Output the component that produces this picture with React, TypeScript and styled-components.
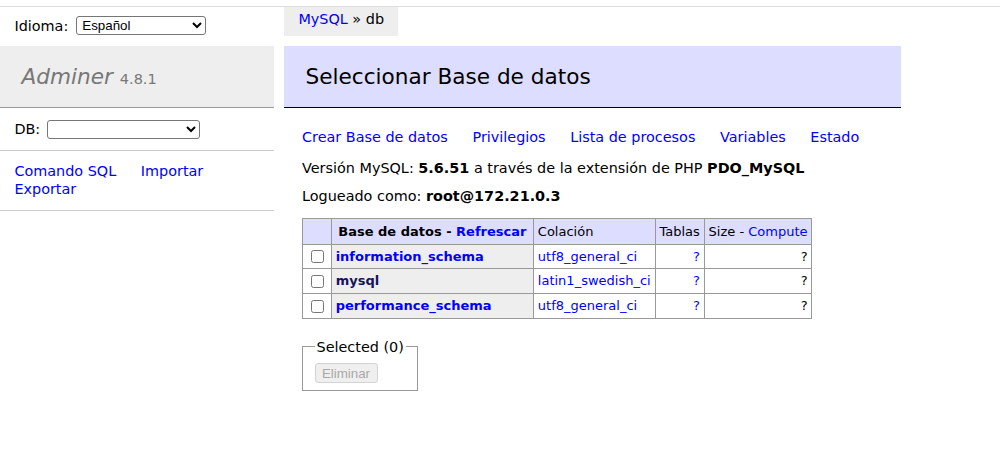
import React from 'react';
import styled, { createGlobalStyle } from 'styled-components';

const Global = createGlobalStyle`
  html, body { margin: 0; padding: 0; background: #fff; }
  body {
    font-family: "DejaVu Sans", Verdana, sans-serif;
    font-size: 14.4px;
    line-height: 18px;
    color: #000;
  }
  a { color: blue; text-decoration: none; }
`;

const TopRule = styled.div`
  height: 6px;
  border-bottom: 1px solid #ddd;
`;

const Page = styled.div`
  display: flex;
  align-items: flex-start;
`;

const Sidebar = styled.aside`
  width: 273.6px;
  flex: none;
`;

const LangBar = styled.div`
  box-sizing: border-box;
  height: 38.8px;
  padding: 4.3px 14.4px 6px;
  display: flex;
  align-items: center;
  gap: 8px;
`;

const NativeSelect = styled.select<{ $w: number }>`
  width: ${(p) => p.$w}px;
  height: 19px;
  font-family: "Liberation Sans", Arial, sans-serif;
  font-size: 13.33px;
  color: #000;
  background: #fff;
  border: 1px solid #767676;
  border-radius: 3px;
  padding: 0 0 0 1px;
`;

const Brand = styled.h1`
  margin: 0;
  padding: 17.28px 21.6px;
  font-size: 21.6px;
  line-height: 27px;
  font-weight: normal;
  color: #777;
  background: #eee;
  border-bottom: 1px solid #999;
`;

const BrandName = styled.span`
  font-style: italic;
`;

const BrandVersion = styled.span`
  font-size: 14.47px;
  line-height: 1;
`;

const SideBlock = styled.div`
  padding: 11.52px 14.4px;
  border-bottom: 1px solid #ccc;
`;

const DbRow = styled(SideBlock)`
  box-sizing: border-box;
  height: 42.5px;
  padding-top: 0;
  padding-bottom: 0;
  display: flex;
  align-items: center;
  gap: 7px;
`;

const NavLink = styled.a`
  margin-right: 20px;
  white-space: nowrap;
`;

const Main = styled.main`
  margin-left: 10.4px;
  width: 617px;
`;

const Breadcrumb = styled.div`
  display: inline-block;
  box-sizing: border-box;
  height: 28.8px;
  line-height: 25.9px;
  padding: 0 14.4px;
  background: #eee;
  white-space: nowrap;
`;

const Heading = styled.h2`
  margin: 10px 0 20px;
  padding: 17.28px 21.6px;
  font-size: 21.6px;
  line-height: 27px;
  font-weight: normal;
  color: #000;
  background: #ddf;
  border-bottom: 1px solid #000;
`;

const Body = styled.div`
  padding-left: 18px;
`;

const Para = styled.p<{ $mb: number }>`
  margin: 0 0 ${(p) => p.$mb}px;
`;

const Table = styled.table`
  border-collapse: collapse;
  margin: 0;
  font-size: 13px;
  line-height: 18px;
`;

const HeadCell = styled.td<{ $th?: boolean }>`
  background: #ddf;
  border: 1px solid #999;
  padding: 3.2px ${(p) => (p.$th ? '6.5px' : '3.9px')};
  text-align: ${(p) => (p.$th ? 'center' : 'left')};
  font-weight: ${(p) => (p.$th ? 'bold' : 'normal')};
  white-space: nowrap;
`;

const Cell = styled.td<{ $right?: boolean }>`
  border: 1px solid #999;
  padding: 2.88px 3.9px;
  text-align: ${(p) => (p.$right ? 'right' : 'left')};
  white-space: nowrap;
`;

const CheckCell = styled.td`
  border: 1px solid #999;
  padding: 0 3.9px;
  line-height: 0;
  & input {
    margin: 3px 3px 3px 4px;
    width: 13px;
    height: 13px;
    vertical-align: middle;
  }
`;

const NameCell = styled.th`
  border: 1px solid #999;
  padding: 2.88px 3.9px;
  background: #eee;
  text-align: left;
  font-weight: bold;
  white-space: nowrap;
`;

const DbLink = styled.a<{ $visited?: boolean }>`
  color: ${(p) => (p.$visited ? '#14145a' : 'blue')};
`;

const Fieldset = styled.fieldset`
  display: inline-block;
  margin: 19px 0 0;
  padding: 7.2px 11.52px;
  border: 1px solid #999;
  vertical-align: top;
  & legend {
    padding: 0 2px;
  }
`;

const DisabledButton = styled.button`
  width: 63px;
  height: 20px;
  box-sizing: border-box;
  padding: 0;
  font-family: "Liberation Sans", Arial, sans-serif;
  font-size: 13.33px;
  color: #a9a9a9;
  background: #efefef;
  border: 1px solid #d4d4d4;
  border-radius: 3px;
  display: block;
`;

const dbs = [
  { name: 'information_schema', coll: 'utf8_general_ci', visited: false },
  { name: 'mysql', coll: 'latin1_swedish_ci', visited: true },
  { name: 'performance_schema', coll: 'utf8_general_ci', visited: false },
];

export default function App() {
  return (
    <>
      <Global />
      <TopRule />
      <Page>
        <Sidebar>
          <LangBar>
            Idioma:
            <NativeSelect $w={130} defaultValue="es">
              <option value="es">Español</option>
            </NativeSelect>
          </LangBar>
          <Brand>
            <BrandName>Adminer</BrandName> <BrandVersion>4.8.1</BrandVersion>
          </Brand>
          <DbRow>
            DB:
            <NativeSelect $w={153} defaultValue="">
              <option value=""></option>
            </NativeSelect>
          </DbRow>
          <SideBlock>
            <NavLink href="#">Comando SQL</NavLink> <NavLink href="#">Importar</NavLink>{' '}
            <NavLink href="#">Exportar</NavLink>
          </SideBlock>
        </Sidebar>
        <Main>
          <Breadcrumb>
            <a href="#">MySQL</a> » db
          </Breadcrumb>
          <Heading>Seleccionar Base de datos</Heading>
          <Body>
            <Para $mb={13}>
              <NavLink href="#">Crear Base de datos</NavLink> <NavLink href="#">Privilegios</NavLink>{' '}
              <NavLink href="#">Lista de procesos</NavLink> <NavLink href="#">Variables</NavLink>{' '}
              <NavLink href="#">Estado</NavLink>
            </Para>
            <Para $mb={10}>
              Versión MySQL: <b>5.6.51</b> a través de la extensión de PHP <b>PDO_MySQL</b>
            </Para>
            <Para $mb={13}>
              Logueado como: <b>root@172.21.0.3</b>
            </Para>
            <form>
              <Table>
                <thead>
                  <tr>
                    <HeadCell></HeadCell>
                    <HeadCell as="th" $th>
                      Base de datos - <a href="#">Refrescar</a>
                    </HeadCell>
                    <HeadCell>Colación</HeadCell>
                    <HeadCell>Tablas</HeadCell>
                    <HeadCell>
                      Size - <a href="#">Compute</a>
                    </HeadCell>
                  </tr>
                </thead>
                <tbody>
                  {dbs.map((d) => (
                    <tr key={d.name}>
                      <CheckCell>
                        <input type="checkbox" />
                      </CheckCell>
                      <NameCell>
                        <DbLink href="#" $visited={d.visited}>
                          {d.name}
                        </DbLink>
                      </NameCell>
                      <Cell>
                        <a href="#">{d.coll}</a>
                      </Cell>
                      <Cell $right>
                        <a href="#">?</a>
                      </Cell>
                      <Cell $right>?</Cell>
                    </tr>
                  ))}
                </tbody>
              </Table>
              <Fieldset>
                <legend>Selected (0)</legend>
                <DisabledButton type="button" disabled>
                  Eliminar
                </DisabledButton>
              </Fieldset>
            </form>
          </Body>
        </Main>
      </Page>
    </>
  );
}
